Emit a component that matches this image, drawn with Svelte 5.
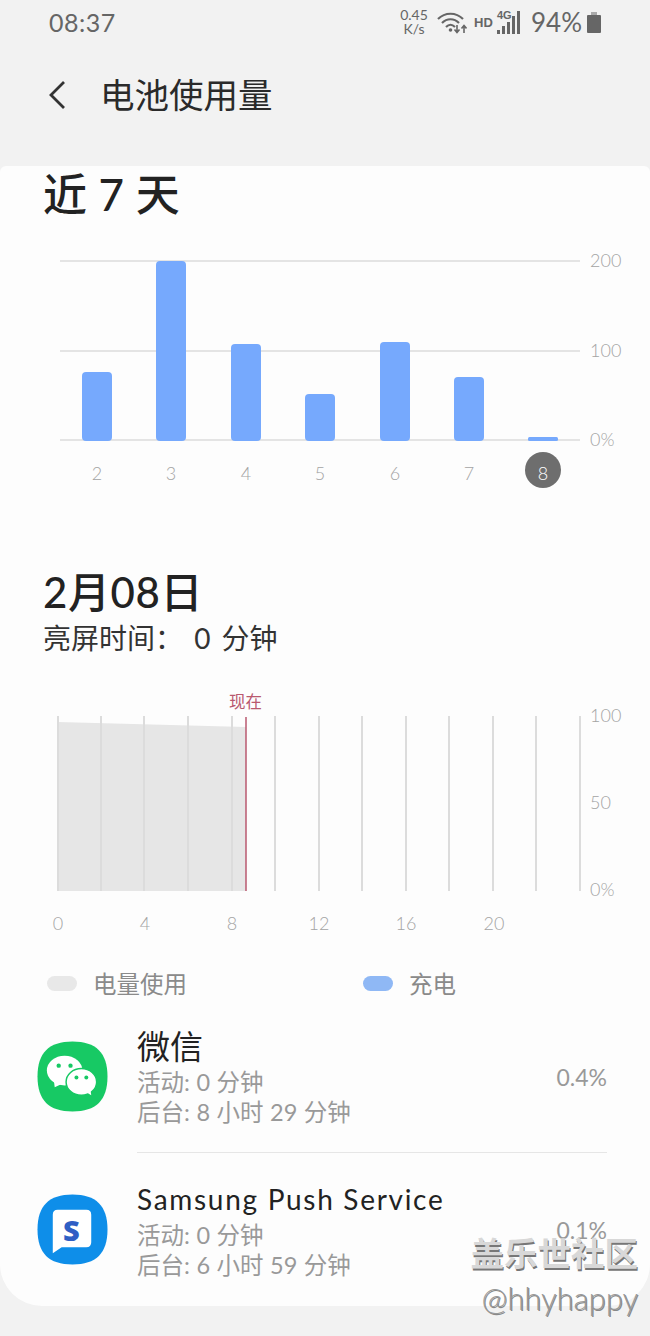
<script>
  const sans = '"Lato", "Noto Sans CJK SC", sans-serif';

  const weekBars = [
    { day: 2, x: 82, top: 372 },
    { day: 3, x: 156, top: 261 },
    { day: 4, x: 231, top: 344 },
    { day: 5, x: 305, top: 394 },
    { day: 6, x: 380, top: 342 },
    { day: 7, x: 454, top: 377 },
    { day: 8, x: 528, top: 437 },
  ];
  const weekTicks = [
    { y: 261, label: "200" },
    { y: 351, label: "100" },
    { y: 440, label: "0%" },
  ];

  const dayLines = [58, 101, 144, 188, 232, 275, 319, 362, 406, 449, 493, 536, 580];
  const dayHours = [
    { x: 58, label: "0" },
    { x: 145, label: "4" },
    { x: 232, label: "8" },
    { x: 319, label: "12" },
    { x: 406, label: "16" },
    { x: 494, label: "20" },
  ];
  const dayTicks = [
    { y: 716, label: "100" },
    { y: 803, label: "50" },
    { y: 890, label: "0%" },
  ];
</script>

<div class="screen" style:--sans={sans}>
  <div class="status">
    <span class="clock">08:37</span>
    <div class="status-right">
      <span class="speed">0.45<br />K/s</span>
      <svg class="wifi" width="30" height="24" viewBox="0 0 30 24" fill="none" aria-hidden="true">
        <path d="M1 8C8 1 19 1 26 8" stroke="#666" stroke-width="2.2" />
        <path d="M5 12C10 7 17 7 22 12" stroke="#666" stroke-width="2.2" />
        <path d="M9 16C12 13 15 13 18 16" stroke="#666" stroke-width="2.2" />
        <circle cx="13.500" cy="19" r="1.800" fill="#666" />
        <path d="M20 14v7M17.500 18.500l2.500 3 2.500-3" stroke="#666" stroke-width="1.600" />
        <path d="M27 22v-7M24.500 17.500l2.500-3 2.500 3" stroke="#666" stroke-width="1.600" />
      </svg>
      <span class="hd">HD</span>
      <div class="signal">
        <span class="four-g">4G</span>
        <svg width="26" height="26" viewBox="0 0 26 26" aria-hidden="true">
          <rect x="0" y="21" width="3" height="4" fill="#666" />
          <rect x="5" y="17" width="3" height="8" fill="#666" />
          <rect x="10" y="13" width="3" height="12" fill="#666" />
          <rect x="15" y="7" width="3" height="18" fill="#666" />
          <rect x="20" y="2" width="3" height="23" fill="#666" />
        </svg>
      </div>
      <span class="percent">94%</span>
      <svg class="battery" width="14" height="21" viewBox="0 0 14 21" aria-hidden="true">
        <rect x="4" y="0" width="6" height="3" fill="#aaa" />
        <rect x="0" y="3" width="14" height="18" rx="1" fill="#666" />
      </svg>
    </div>
  </div>

  <header class="topbar">
    <svg width="18" height="30" viewBox="0 0 18 30" fill="none" aria-hidden="true">
      <path d="M16 2L3 15L16 28" stroke="#333" stroke-width="2.800" />
    </svg>
    <h1>电池使用量</h1>
  </header>

  <main class="card">
    <h2 class="week-title">近 7 天</h2>

    <svg class="chart week-chart" width="650" height="268" viewBox="0 232 650 268" aria-hidden="true">
      {#each weekTicks as tick}
        <line x1="60" x2="580" y1={tick.y} y2={tick.y} stroke="#e4e4e4" stroke-width="2" />
        <text x="590" y={tick.y + 6} class="axis">{tick.label}</text>
      {/each}
      {#each weekBars as bar}
        <rect x={bar.x} y={bar.top} width="30" height={441 - bar.top} rx={bar.day === 8 ? 1.5 : 4} fill="#76a9fd" />
      {/each}
      <circle cx="543" cy="470" r="18" fill="#6e6e6e" />
      {#each weekBars as bar}
        <text x={bar.x + 15} y="480" class="axis mid" class:today={bar.day === 8}>{bar.day}</text>
      {/each}
    </svg>

    <section class="day-head">
      <h2>2月08日</h2>
      <p>亮屏时间：&nbsp;0 分钟</p>
    </section>

    <svg class="chart day-chart" width="650" height="250" viewBox="0 690 650 250" aria-hidden="true">
      <polygon points="58,722 246,727 246,891 58,891" fill="#e6e6e6" />
      {#each dayLines as x}
        <line x1={x} x2={x} y1="716" y2="891" stroke="#dcdcdc" stroke-width="2" />
      {/each}
      <line x1="246" x2="246" y1="717" y2="891" stroke="#b9596f" stroke-width="1.500" />
      <text x="245.500" y="708" class="now">现在</text>
      {#each dayTicks as tick}
        <text x="590" y={tick.y + 6} class="axis">{tick.label}</text>
      {/each}
      {#each dayHours as hour}
        <text x={hour.x} y="930" class="axis mid">{hour.label}</text>
      {/each}
    </svg>

    <div class="legend">
      <div class="legend-item used"><i></i>电量使用</div>
      <div class="legend-item charge"><i></i>充电</div>
    </div>

    <div class="app wechat">
      <svg width="71" height="71" viewBox="0 0 72 72" aria-hidden="true">
        <path d="M36 0.500C60 0.500 71.500 12 71.500 36C71.500 60 60 71.500 36 71.500C12 71.500 0.500 60 0.500 36C0.500 12 12 0.500 36 0.500Z" fill="#17c964" />
        <ellipse cx="28" cy="30" rx="18" ry="15" fill="#fff" />
        <path d="M17 39l1 8l8-4z" fill="#fff" />
        <circle cx="22" cy="25" r="2.200" fill="#17c964" />
        <circle cx="34" cy="25" r="2.200" fill="#17c964" />
        <ellipse cx="45" cy="41.500" rx="15.500" ry="13.500" fill="#fff" stroke="#17c964" stroke-width="1.500" />
        <path d="M50 52l5 3l-1-7z" fill="#fff" />
        <circle cx="40" cy="37" r="2" fill="#17c964" />
        <circle cx="50" cy="37" r="2" fill="#17c964" />
      </svg>
      <div class="app-text">
        <h3>微信</h3>
        <p>活动: 0 分钟</p>
        <p>后台: 8 小时 29 分钟</p>
      </div>
      <span class="usage">0.4%</span>
    </div>

    <div class="divider"></div>

    <div class="app samsung">
      <svg width="71" height="71" viewBox="0 0 72 72" aria-hidden="true">
        <path d="M36 0.500C60 0.500 71.500 12 71.500 36C71.500 60 60 71.500 36 71.500C12 71.500 0.500 60 0.500 36C0.500 12 12 0.500 36 0.500Z" fill="#0e8ee9" />
        <path d="M21 16H50Q55 16 55 21V49Q55 54 50 54H25L16 60V21Q16 16 21 16Z" fill="#fff" />
      </svg>
      <span class="s-mark">S</span>
      <div class="app-text">
        <h3 class="latin">Samsung Push Service</h3>
        <p>活动: 0 分钟</p>
        <p>后台: 6 小时 59 分钟</p>
      </div>
      <span class="usage">0.1%</span>
    </div>
  </main>

  <div class="watermark">
    <span class="wm-cn">盖乐世社区</span>
    <span class="wm-en">@hhyhappy</span>
  </div>
</div>

<style>
  :global(body) {
    margin: 0;
    background: #f2f2f2;
  }

  .screen {
    position: relative;
    width: 650px;
    height: 1336px;
    overflow: hidden;
    background: #f2f2f2;
    font-family: var(--sans);
    color: #222;
  }

  h1,
  h2,
  h3,
  p {
    margin: 0;
    font-weight: 400;
  }

  .status {
    display: flex;
    justify-content: space-between;
    align-items: center;
    height: 44px;
    padding: 0 49px;
    color: #666;
  }

  .clock {
    font-size: 25px;
    letter-spacing: 0.5px;
  }

  .status-right {
    display: flex;
    align-items: center;
  }

  .speed {
    width: 28px;
    font-size: 14px;
    line-height: 14px;
    text-align: center;
  }

  .wifi {
    margin: 0 0 -2px 9px;
  }

  .hd {
    width: 18px;
    margin-left: 7px;
    font-size: 13px;
    font-weight: 900;
    font-family: "Liberation Sans", sans-serif;
  }

  .signal {
    position: relative;
    display: flex;
    width: 26px;
    height: 26px;
    margin-left: 5px;
  }

  .four-g {
    position: absolute;
    left: 0;
    top: 0;
    font-size: 11px;
    font-weight: 900;
    line-height: 12px;
    font-family: "Liberation Sans", sans-serif;
  }

  .percent {
    margin-left: 8px;
    font-size: 26px;
  }

  .battery {
    margin-left: 5px;
  }

  .topbar {
    display: flex;
    align-items: center;
    gap: 34px;
    height: 122px;
    padding: 0 0 20px 48px;
    box-sizing: border-box;
  }

  .topbar h1 {
    font-size: 34.500px;
    line-height: 40px;
    color: #2a2a2a;
  }

  .card {
    height: 1140px;
    box-sizing: border-box;
    background: #fdfdfd;
    border-radius: 6px 6px 42px 42px;
    overflow: hidden;
  }

  .week-title {
    height: 56px;
    margin-left: 43px;
    font-size: 44px;
    line-height: 56px;
    font-weight: 500;
    word-spacing: 0.500px;
    color: #222;
  }

  .chart {
    display: block;
  }

  .week-chart {
    margin-top: 10px;
  }

  .axis {
    font-family: var(--sans);
    font-size: 18px;
    font-weight: 300;
    fill: #a4a4a4;
  }

  .mid {
    text-anchor: middle;
  }

  .today {
    fill: #fff;
  }

  .now {
    font-family: var(--sans);
    font-size: 16.500px;
    fill: #b9596f;
    text-anchor: middle;
  }

  .day-head {
    margin-top: 66px;
    padding-left: 43px;
  }

  .day-head h2 {
    font-size: 42px;
    line-height: 52px;
    font-weight: 500;
    letter-spacing: 0.6px;
  }

  .day-head p {
    margin-top: -2px;
    font-size: 28px;
    line-height: 44px;
    word-spacing: 4px;
    color: #333;
  }

  .day-chart {
    margin-top: 30px;
  }

  .legend {
    display: flex;
    align-items: center;
    height: 40px;
    margin-top: 23px;
    padding-left: 47px;
    font-size: 23.500px;
    color: #8a8a8a;
  }

  .legend-item {
    display: flex;
    align-items: center;
    gap: 16px;
  }

  .legend-item i {
    display: block;
    width: 30px;
    height: 15px;
    border-radius: 8px;
    background: #e8e8e8;
  }

  .used {
    width: 316px;
  }

  .charge i {
    background: #8fb8f5;
  }

  .app {
    position: relative;
    display: flex;
    align-items: center;
    height: 112px;
    padding: 0 43px 0 37px;
  }

  .app-text {
    flex: 1;
    margin: 0 0 0 29px;
  }

  .app-text h3 {
    font-size: 33px;
    line-height: 42px;
    color: #222;
  }

  .app-text h3.latin {
    font-size: 28px;
    letter-spacing: 1.700px;
  }

  .app-text p {
    font-size: 23.500px;
    line-height: 30px;
    word-spacing: 0.5px;
    color: #999;
  }

  .usage {
    margin-top: 2px;
    font-size: 23px;
    color: #999;
  }

  .wechat {
    margin-top: 17px;
  }

  .divider {
    height: 1px;
    margin: 20px 43px 0 137px;
    background: #e6e6e6;
  }

  .samsung {
    margin-top: 20px;
  }

  .s-mark {
    position: absolute;
    left: 63px;
    top: 50%;
    transform: translateY(-50%);
    font-family: "Open Sans", sans-serif;
    font-size: 29px;
    font-weight: 800;
    line-height: 1;
    color: #2f5fc4;
  }

  .watermark {
    position: absolute;
    right: 12px;
    top: 1232px;
    display: flex;
    flex-direction: column;
    align-items: flex-end;
  }

  .wm-cn {
    font-size: 33.500px;
    line-height: 42px;
    font-weight: 700;
    color: #d8d8d8;
    text-shadow: 1px 2px 0 #777;
  }

  .wm-en {
    margin-top: 6px;
    font-size: 31px;
    line-height: 36px;
    font-weight: 300;
    color: #999;
    text-shadow: 1px 1px 0 #888;
  }
</style>
